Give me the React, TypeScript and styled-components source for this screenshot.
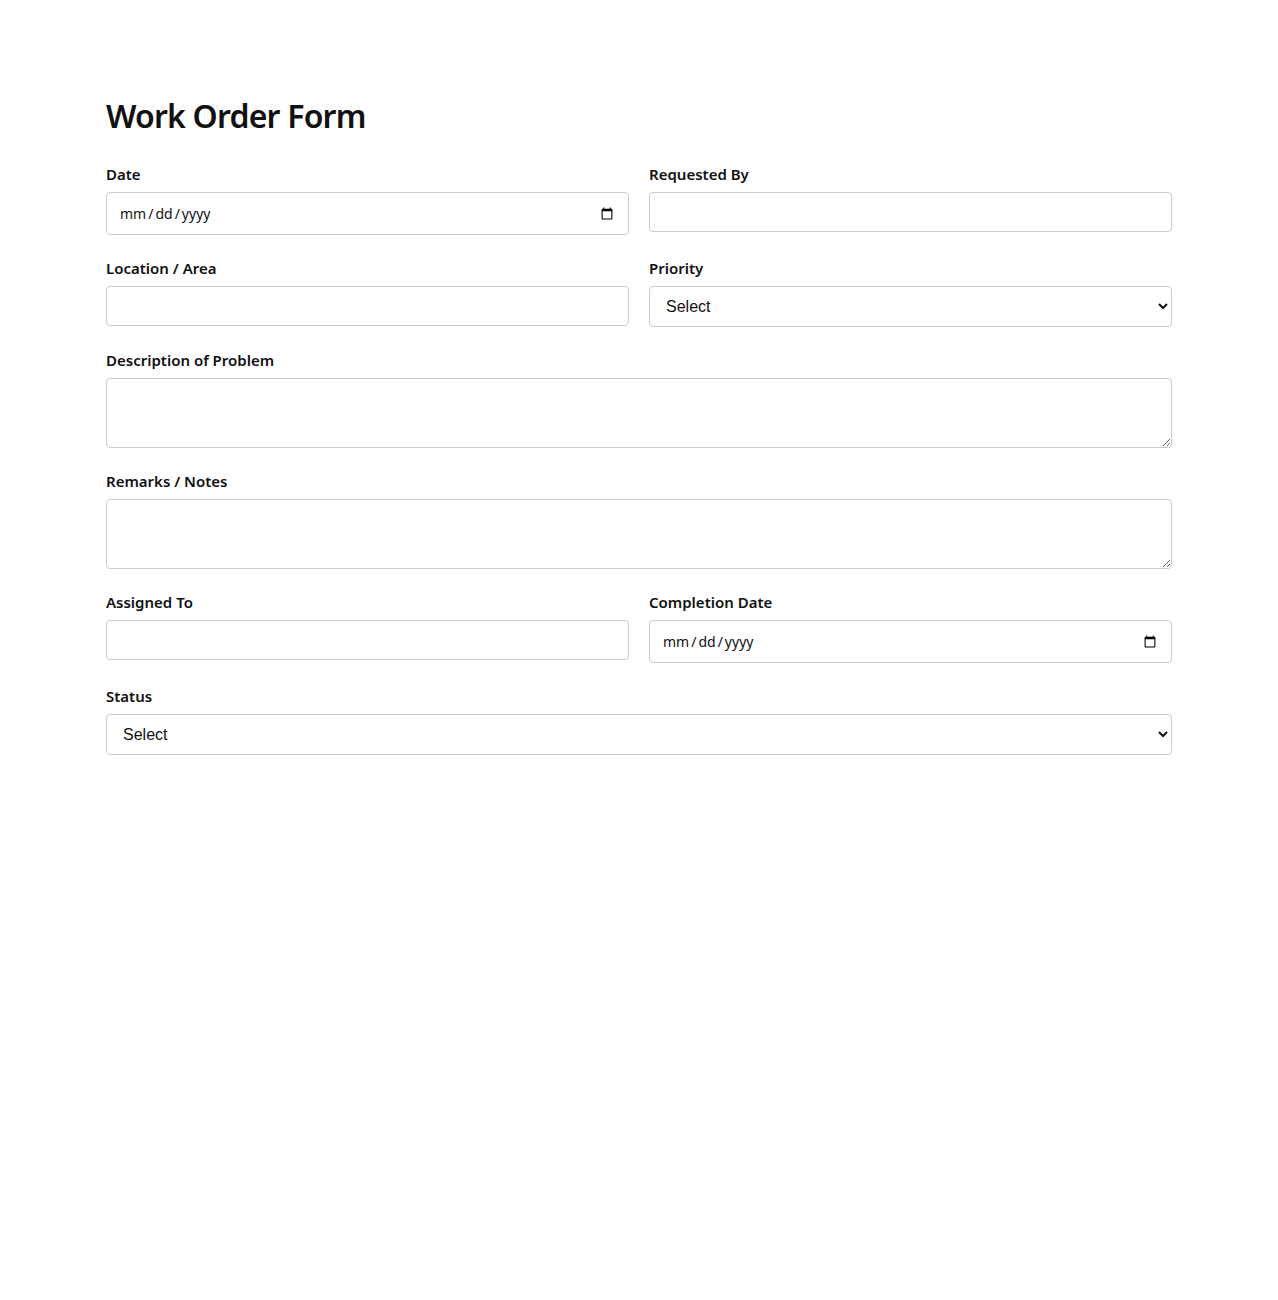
import React from "react";
import styled, { createGlobalStyle } from "styled-components";

const GlobalStyle = createGlobalStyle`
  * {
    box-sizing: border-box;
  }
  body {
    margin: 0;
    background: #ffffff;
    font-family: "Noto Sans", "Open Sans", sans-serif;
    color: #111111;
  }
`;

const Page = styled.div`
  width: 1066px;
  margin: 0 auto;
  padding-top: 94px;
`;

const Heading = styled.h1`
  font-size: 32px;
  font-weight: 600;
  letter-spacing: -0.8px;
  margin: 0 0 26px;
  line-height: 44px;
  color: #111111;
`;

const Form = styled.form`
  display: grid;
  grid-template-columns: 1fr 1fr;
  column-gap: 20px;
  row-gap: 23px;
  align-items: start;
`;

const Field = styled.div<{ $wide?: boolean }>`
  display: flex;
  flex-direction: column;
  grid-column: ${(p) => (p.$wide ? "1 / -1" : "auto")};
`;

const Label = styled.label`
  font-size: 15px;
  font-weight: 600;
  line-height: 20px;
  margin-bottom: 8px;
  color: #111111;
`;

const fieldBase = `
  width: 100%;
  border: 1px solid #cccccc;
  border-radius: 4px;
  background: #ffffff;
  color: #111111;
  outline: none;
`;

const TextInput = styled.input`
  ${fieldBase}
  height: 40px;
  padding: 0 12px;
  font-size: 16px;
  font-family: inherit;
`;

const DateInput = styled.input.attrs({ type: "date" })`
  ${fieldBase}
  height: 43px;
  padding: 0 12px;
  font-size: 14px;
  font-family: inherit;

  &::-webkit-datetime-edit-text {
    padding: 0 1px;
  }
`;

const Select = styled.select`
  ${fieldBase}
  height: 41px;
  padding: 0 12px;
  font-size: 16px;
  font-family: "Liberation Sans", Arial, sans-serif;
`;

const TextArea = styled.textarea`
  ${fieldBase}
  height: 70px;
  padding: 10px 12px;
  font-size: 16px;
  font-family: inherit;
  resize: vertical;
`;

export default function App() {
  return (
    <>
      <GlobalStyle />
      <Page>
        <Heading>Work Order Form</Heading>
        <Form>
          <Field>
            <Label>Date</Label>
            <DateInput />
          </Field>
          <Field>
            <Label>Requested By</Label>
            <TextInput type="text" />
          </Field>
          <Field>
            <Label>Location / Area</Label>
            <TextInput type="text" />
          </Field>
          <Field>
            <Label>Priority</Label>
            <Select defaultValue="">
              <option value="">Select</option>
              <option value="low">Low</option>
              <option value="medium">Medium</option>
              <option value="high">High</option>
            </Select>
          </Field>
          <Field $wide>
            <Label>Description of Problem</Label>
            <TextArea />
          </Field>
          <Field $wide>
            <Label>Remarks / Notes</Label>
            <TextArea />
          </Field>
          <Field>
            <Label>Assigned To</Label>
            <TextInput type="text" />
          </Field>
          <Field>
            <Label>Completion Date</Label>
            <DateInput />
          </Field>
          <Field $wide>
            <Label>Status</Label>
            <Select defaultValue="">
              <option value="">Select</option>
              <option value="open">Open</option>
              <option value="in-progress">In Progress</option>
              <option value="completed">Completed</option>
            </Select>
          </Field>
        </Form>
      </Page>
    </>
  );
}
